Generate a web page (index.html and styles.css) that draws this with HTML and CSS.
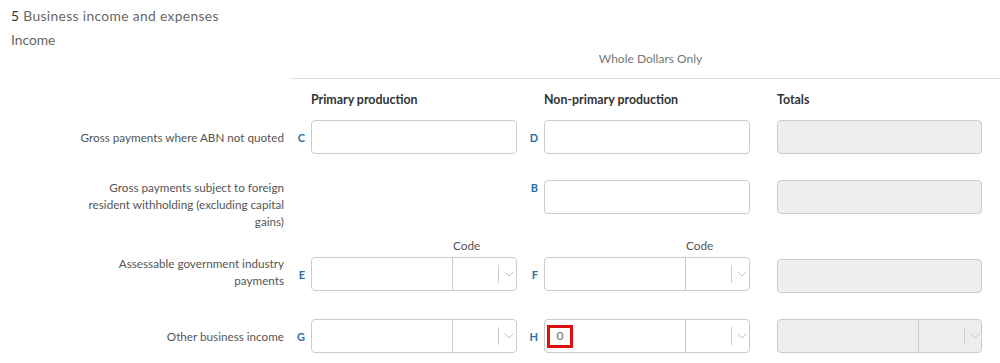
FILE: index.html
```html
<!DOCTYPE html>
<html>
<head>
<meta charset="utf-8">
<link rel="stylesheet" href="styles.css">
</head>
<body>
<div class="page">
  <div class="title"><span class="num">5</span> Business income and expenses</div>
  <div class="subtitle">Income</div>
  <div class="dollars">Whole Dollars Only</div>
  <div class="rule"></div>

  <div class="row head-row">
    <div></div><div></div>
    <div class="col-head">Primary production</div>
    <div></div>
    <div class="col-head">Non-primary production</div>
    <div></div>
    <div class="col-head">Totals</div>
  </div>

  <div class="row row1">
    <div class="label">Gross payments where ABN not quoted</div>
    <div class="letter">C</div>
    <div class="box"></div>
    <div class="letter">D</div>
    <div class="box"></div>
    <div></div>
    <div class="box total"></div>
  </div>

  <div class="row row2">
    <div class="label label-top">Gross payments subject to foreign resident withholding (excluding capital gains)</div>
    <div></div>
    <div></div>
    <div class="letter">B</div>
    <div class="box"></div>
    <div></div>
    <div class="box total"></div>
  </div>

  <div class="row code-row">
    <div></div><div></div>
    <div class="code-cell">Code</div>
    <div></div>
    <div class="code-cell">Code</div>
    <div></div><div></div>
  </div>

  <div class="row row3">
    <div class="label">Assessable government industry payments</div>
    <div class="letter">E</div>
    <div class="box combo">
      <div class="combo-text"></div>
      <div class="combo-select"><span class="sep"></span><svg class="chev" width="10" height="6" viewBox="0 0 10 6"><path d="M0.5 0.5 L5 5 L9.5 0.5" fill="none" stroke="#c4c4c4" stroke-width="1"/></svg></div>
    </div>
    <div class="letter">F</div>
    <div class="box combo">
      <div class="combo-text"></div>
      <div class="combo-select"><span class="sep"></span><svg class="chev" width="10" height="6" viewBox="0 0 10 6"><path d="M0.5 0.5 L5 5 L9.5 0.5" fill="none" stroke="#c4c4c4" stroke-width="1"/></svg></div>
    </div>
    <div></div>
    <div class="box total total-low"></div>
  </div>

  <div class="row row4">
    <div class="label">Other business income</div>
    <div class="letter">G</div>
    <div class="box combo">
      <div class="combo-text"></div>
      <div class="combo-select"><span class="sep"></span><svg class="chev" width="10" height="6" viewBox="0 0 10 6"><path d="M0.5 0.5 L5 5 L9.5 0.5" fill="none" stroke="#c4c4c4" stroke-width="1"/></svg></div>
    </div>
    <div class="letter">H</div>
    <div class="box combo">
      <div class="combo-text"><span class="value">0</span></div>
      <div class="combo-select"><span class="sep"></span><svg class="chev" width="10" height="6" viewBox="0 0 10 6"><path d="M0.5 0.5 L5 5 L9.5 0.5" fill="none" stroke="#c4c4c4" stroke-width="1"/></svg></div>
    </div>
    <div></div>
    <div class="box combo total">
      <div class="combo-text"></div>
      <div class="combo-select"><span class="sep"></span><svg class="chev" width="10" height="6" viewBox="0 0 10 6"><path d="M0.5 0.5 L5 5 L9.5 0.5" fill="none" stroke="#c4c4c4" stroke-width="1"/></svg></div>
    </div>
  </div>
</div>
</body>
</html>
```

FILE: styles.css
```css
* { box-sizing: border-box; }
body {
  margin: 0;
  background: #fff;
  font-family: Lato, "Open Sans", Arial, sans-serif;
  color: #555;
  font-size: 12px;
  line-height: 16px;
}
.page {
  padding: 7px 0 0 0;
  width: 1000px;
}
.title {
  font-size: 13.8px;
  line-height: 18px;
  padding-left: 11px;
  color: #666;
  letter-spacing: 0.36px;
}
.title .num { color: #333; }
.subtitle {
  font-size: 13.8px;
  line-height: 18px;
  margin-top: 6px;
  padding-left: 11px;
  color: #666;
}
.dollars {
  margin-left: 291px;
  text-align: center;
  font-size: 12px;
  line-height: 16px;
  color: #777;
  margin-top: 2px;
  padding-left: 10px;
}
.rule {
  margin-left: 291px;
  height: 1px;
  background: #dedede;
  margin-top: 11px;
}
.row {
  display: grid;
  grid-template-columns: 284px 27px 206px 27px 206px 27px 205px;
}
.head-row { margin-top: 13px; }
.col-head {
  font-size: 12.4px;
  line-height: 16px;
  font-weight: bold;
  color: #333;
}
.row1 { margin-top: 12px; align-items: center; }
.row2 { margin-top: 25px; align-items: start; }
.row2 .box { margin-top: 1px; }
.code-row { margin-top: 9px; }
.row3 { margin-top: 2px; align-items: start; }
.row3 .label { margin-top: 0; }
.row3 .box { margin-top: 2px; }
.row3 .total-low { margin-top: 4px; }
.row3 .letter { margin-top: 11px; }
.row4 { margin-top: 26px; align-items: center; }
.label {
  font-size: 11.7px;
  line-height: 17px;
  text-align: right;
  color: #555;
  padding-left: 78px;
}
.letter {
  font-size: 11px;
  font-weight: bold;
  color: #2a6fa3;
  text-align: right;
  padding-right: 6px;
  line-height: 17px;
}
.box {
  height: 34px;
  border: 1px solid #ccc;
  border-radius: 4px;
  background: #fff;
}
.total { background: #eee; }
.combo { display: flex; }
.combo-text {
  width: 141px;
  border-right: 1px solid #ccc;
  display: flex;
  align-items: center;
  padding-left: 2px;
}
.combo-select {
  flex: 1;
  display: flex;
  align-items: center;
  padding-left: 45px;
}
.sep {
  width: 1px;
  height: 18px;
  background: #ccc;
}
.chev { margin-left: 5px; }
.code-cell {
  padding-left: 142px;
  font-size: 11.8px;
  line-height: 14px;
  color: #555;
}
.value {
  display: inline-flex;
  align-items: center;
  justify-content: center;
  width: 26px;
  height: 23px;
  border: 3px solid #e01010;
  font-size: 12px;
  color: #666;
}
```
